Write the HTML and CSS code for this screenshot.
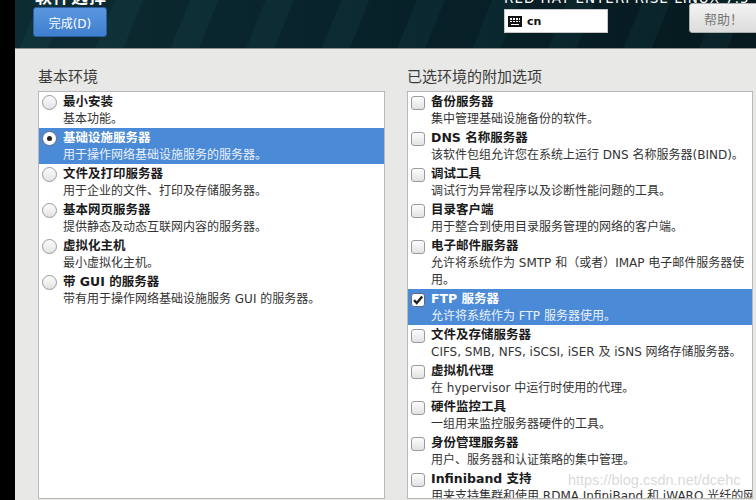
FILE: index.html
```html
<!DOCTYPE html>
<html lang="zh-CN">
<head>
<meta charset="utf-8">
<link rel="stylesheet" href="styles.css">
</head>
<body>
<div class="strip"></div>
<div class="main">
  <header class="header">
    <div class="hleft">
      <div class="title">软件选择</div>
      <button class="done">完成(D)</button>
    </div>
    <div class="hright">
      <div class="product">RED HAT ENTERPRISE LINUX 7.5 安装</div>
      <div class="hrow">
        <div class="kbd">
          <svg width="14" height="11" viewBox="0 0 14 11"><rect x="0" y="0" width="14" height="11" fill="#111"/><g fill="#fff"><rect x="2" y="2" width="2" height="2"/><rect x="5" y="2" width="2" height="2"/><rect x="8" y="2" width="2" height="2"/><rect x="11" y="2" width="1" height="2"/><rect x="2" y="5" width="2" height="1"/><rect x="5" y="5" width="2" height="1"/><rect x="8" y="5" width="2" height="1"/><rect x="11" y="5" width="1" height="1"/><rect x="3" y="8" width="8" height="1"/></g></svg>
          <span>cn</span>
        </div>
        <button class="help">帮助！</button>
      </div>
    </div>
  </header>
  <section class="content">
    <div class="col">
      <div class="label">基本环境</div>
      <div class="box">
        <div class="item"><span class="radio"></span><div class="txt"><div class="t">最小安装</div><div class="d">基本功能。</div></div></div>
        <div class="item sel"><span class="radio on"></span><div class="txt"><div class="t">基础设施服务器</div><div class="d">用于操作网络基础设施服务的服务器。</div></div></div>
        <div class="item"><span class="radio"></span><div class="txt"><div class="t">文件及打印服务器</div><div class="d">用于企业的文件、打印及存储服务器。</div></div></div>
        <div class="item"><span class="radio"></span><div class="txt"><div class="t">基本网页服务器</div><div class="d">提供静态及动态互联网内容的服务器。</div></div></div>
        <div class="item"><span class="radio"></span><div class="txt"><div class="t">虚拟化主机</div><div class="d">最小虚拟化主机。</div></div></div>
        <div class="item"><span class="radio"></span><div class="txt"><div class="t">带 GUI 的服务器</div><div class="d">带有用于操作网络基础设施服务 GUI 的服务器。</div></div></div>
      </div>
    </div>
    <div class="col right">
      <div class="label">已选环境的附加选项</div>
      <div class="box">
        <div class="item"><span class="check"></span><div class="txt"><div class="t">备份服务器</div><div class="d">集中管理基础设施备份的软件。</div></div></div>
        <div class="item"><span class="check"></span><div class="txt"><div class="t">DNS 名称服务器</div><div class="d">该软件包组允许您在系统上运行 DNS 名称服务器(BIND)。</div></div></div>
        <div class="item"><span class="check"></span><div class="txt"><div class="t">调试工具</div><div class="d">调试行为异常程序以及诊断性能问题的工具。</div></div></div>
        <div class="item"><span class="check"></span><div class="txt"><div class="t">目录客户端</div><div class="d">用于整合到使用目录服务管理的网络的客户端。</div></div></div>
        <div class="item"><span class="check"></span><div class="txt"><div class="t">电子邮件服务器</div><div class="d">允许将系统作为 SMTP 和（或者）IMAP 电子邮件服务器使<br>用。</div></div></div>
        <div class="item sel"><span class="check on"><svg width="12" height="12" viewBox="0 0 12 12"><path d="M2 6.2 L4.8 9 L10.2 2.6" fill="none" stroke="#222" stroke-width="2.4"/></svg></span><div class="txt"><div class="t">FTP 服务器</div><div class="d">允许将系统作为 FTP 服务器使用。</div></div></div>
        <div class="item"><span class="check"></span><div class="txt"><div class="t">文件及存储服务器</div><div class="d">CIFS, SMB, NFS, iSCSI, iSER 及 iSNS 网络存储服务器。</div></div></div>
        <div class="item"><span class="check"></span><div class="txt"><div class="t">虚拟机代理</div><div class="d">在 hypervisor 中运行时使用的代理。</div></div></div>
        <div class="item"><span class="check"></span><div class="txt"><div class="t">硬件监控工具</div><div class="d">一组用来监控服务器硬件的工具。</div></div></div>
        <div class="item"><span class="check"></span><div class="txt"><div class="t">身份管理服务器</div><div class="d">用户、服务器和认证策略的集中管理。</div></div></div>
        <div class="item"><span class="check"></span><div class="txt"><div class="t">Infiniband 支持</div><div class="d">用来支持集群和使用 RDMA InfiniBand 和 iWARO 光纤的网</div></div></div>
      </div>
    </div>
  </section>
</div>
<div class="watermark">https://blog.csdn.net/dcehc</div>
</body>
</html>
```
FILE: styles.css
```css
html, body {
  margin: 0;
  padding: 0;
  width: 756px;
  height: 500px;
  overflow: hidden;
}
body {
  display: flex;
  background: #000;
  font-family: "DejaVu Sans", "Noto Sans CJK SC", sans-serif;
  position: relative;
}
.strip {
  width: 15px;
  flex: none;
  background: #000;
}
.main {
  flex: 1;
  display: flex;
  flex-direction: column;
  min-width: 0;
  background: #e8e8e7;
}
.header {
  height: 48px;
  flex: none;
  display: flex;
  justify-content: space-between;
  border-bottom: 1px solid #8f9596;
  background:
    repeating-linear-gradient(112deg, rgba(60,150,160,0) 0px, rgba(60,150,160,0) 22px, rgba(60,150,160,0.07) 23px, rgba(60,150,160,0.07) 48px, rgba(60,150,160,0) 49px, rgba(60,150,160,0) 70px),
    linear-gradient(to right, #0d2c32, #08222a 45%, #061a1f);
  overflow: hidden;
}
.hleft {
  padding-left: 18px;
  display: flex;
  flex-direction: column;
}
.title {
  color: #fff;
  font-weight: bold;
  font-size: 17px;
  line-height: 18px;
  margin-top: -13px;
  margin-left: 2px;
  font-family: "Noto Sans CJK SC", sans-serif;
  letter-spacing: 1px;
}
.done {
  margin-top: 2px;
  width: 74px;
  height: 30px;
  border: 1px solid #2c5f9e;
  border-radius: 3px;
  background: linear-gradient(#5a97e0, #3f7fcf);
  color: #fff;
  font-family: "DejaVu Sans", "Noto Sans CJK SC", sans-serif;
  font-size: 12px;
  padding: 0;
}
.hright {
  display: flex;
  flex-direction: column;
  width: 265px;
  margin-right: -13px;
  flex: none;
}
.product {
  color: #fff;
  font-size: 13.5px;
  line-height: 16px;
  margin-top: -10px;
  letter-spacing: 1px;
  white-space: nowrap;
}
.hrow {
  display: flex;
  align-items: flex-start;
  justify-content: space-between;
}
.kbd {
  margin-top: 3px;
  width: 104px;
  height: 24px;
  background: #fff;
  border: 1px solid #c8c8c8;
  box-sizing: border-box;
  display: flex;
  align-items: center;
  gap: 5px;
  padding-left: 3px;
}
.kbd svg { display: block; }
.kbd span {
  font-weight: bold;
  font-size: 11px;
  color: #111;
}
.help {
  margin-top: -3px;
  width: 80px;
  height: 30px;
  border: 1px solid #aab0b2;
  border-radius: 3px;
  background: linear-gradient(#f3f3f3, #dcdcdc);
  color: #777;
  font-family: "Noto Sans CJK SC", sans-serif;
  font-size: 13px;
  text-align: left;
  padding: 0 0 0 14px;
}
.content {
  flex: 1;
  display: flex;
  gap: 22px;
  padding: 17px 3px 0 23px;
  min-height: 0;
}
.col {
  width: 347px;
  display: flex;
  flex-direction: column;
  min-height: 0;
}
.col.right { width: 346px; }
.label {
  font-size: 15px;
  line-height: 20px;
  color: #3a3a3a;
  margin-bottom: 5px;
  font-family: "Noto Sans CJK SC", sans-serif;
}
.box {
  flex: 1;
  background: #fff;
  border: 1px solid #b9b9b9;
  margin-bottom: 1px;
  overflow: hidden;
}
.item {
  display: flex;
  align-items: flex-start;
  padding-top: 1px;
}
.item.sel { background: #4a8ad6; }
.txt { min-width: 0; }
.t {
  font-weight: bold;
  font-size: 12.5px;
  line-height: 18px;
  color: #1a1a1a;
  white-space: nowrap;
}
.d {
  font-size: 12px;
  line-height: 17px;
  color: #333;
  white-space: nowrap;
}
.sel .t { color: #fff; }
.sel .d { color: #eaf1fb; }
.radio {
  flex: none;
  width: 13px;
  height: 13px;
  border: 1px solid #9a9a9a;
  border-radius: 50%;
  background: linear-gradient(#fdfdfd, #e3e3e3);
  margin: 2px 6px 0 3px;
  display: flex;
  align-items: center;
  justify-content: center;
}
.radio.on {
  background: #fff;
  border-color: #5a6b80;
}
.radio.on::after {
  content: "";
  width: 5px;
  height: 5px;
  border-radius: 50%;
  background: #222;
}
.check {
  flex: none;
  width: 12px;
  height: 12px;
  border: 1px solid #9a9a9a;
  border-radius: 3px;
  background: linear-gradient(#fdfdfd, #e2e2e2);
  margin: 3px 6px 0 3px;
  display: flex;
  align-items: center;
  justify-content: center;
}
.check.on {
  background: #fff;
  border-color: #5a6b80;
}
.check svg { display: block; }
.watermark {
  position: absolute;
  left: 568px;
  top: 472px;
  font-family: "Liberation Sans", sans-serif;
  font-size: 14.5px;
  color: rgba(205, 205, 205, 0.75);
  pointer-events: none;
}
```
